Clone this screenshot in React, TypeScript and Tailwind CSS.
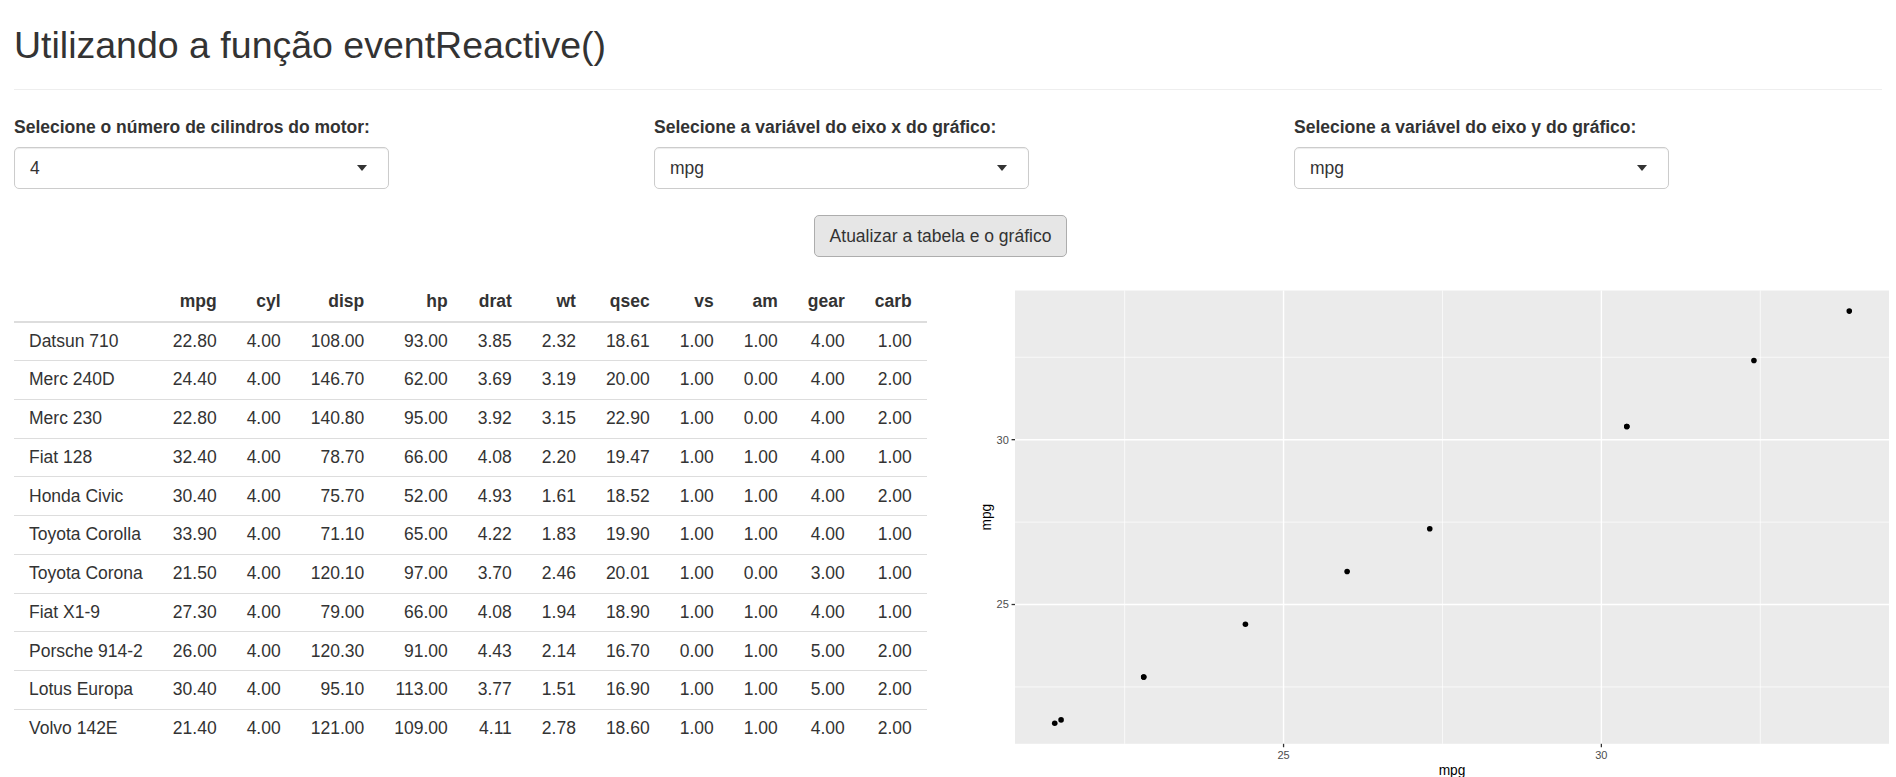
import React from 'react';

const cols = ['mpg', 'cyl', 'disp', 'hp', 'drat', 'wt', 'qsec', 'vs', 'am', 'gear', 'carb'];

const rows: [string, string[]][] = [
  ['Datsun 710', ['22.80', '4.00', '108.00', '93.00', '3.85', '2.32', '18.61', '1.00', '1.00', '4.00', '1.00']],
  ['Merc 240D', ['24.40', '4.00', '146.70', '62.00', '3.69', '3.19', '20.00', '1.00', '0.00', '4.00', '2.00']],
  ['Merc 230', ['22.80', '4.00', '140.80', '95.00', '3.92', '3.15', '22.90', '1.00', '0.00', '4.00', '2.00']],
  ['Fiat 128', ['32.40', '4.00', '78.70', '66.00', '4.08', '2.20', '19.47', '1.00', '1.00', '4.00', '1.00']],
  ['Honda Civic', ['30.40', '4.00', '75.70', '52.00', '4.93', '1.61', '18.52', '1.00', '1.00', '4.00', '2.00']],
  ['Toyota Corolla', ['33.90', '4.00', '71.10', '65.00', '4.22', '1.83', '19.90', '1.00', '1.00', '4.00', '1.00']],
  ['Toyota Corona', ['21.50', '4.00', '120.10', '97.00', '3.70', '2.46', '20.01', '1.00', '0.00', '3.00', '1.00']],
  ['Fiat X1-9', ['27.30', '4.00', '79.00', '66.00', '4.08', '1.94', '18.90', '1.00', '1.00', '4.00', '1.00']],
  ['Porsche 914-2', ['26.00', '4.00', '120.30', '91.00', '4.43', '2.14', '16.70', '0.00', '1.00', '5.00', '2.00']],
  ['Lotus Europa', ['30.40', '4.00', '95.10', '113.00', '3.77', '1.51', '16.90', '1.00', '1.00', '5.00', '2.00']],
  ['Volvo 142E', ['21.40', '4.00', '121.00', '109.00', '4.11', '2.78', '18.60', '1.00', '1.00', '4.00', '2.00']],
];

const SelectBox = ({ label, value }: { label: string; value: string }) => (
  <div>
    <label className="block font-bold leading-[25px]">{label}</label>
    <div className="mt-[7px] w-[375px] h-[42px] border border-[#ccc] rounded-[5px] bg-white px-[15px] flex items-center justify-between shadow-[inset_0_1px_1px_rgba(0,0,0,0.075)]">
      <span className="leading-[25px]">{value}</span>
      <span className="mr-[6px] w-0 h-0 border-x-[5px] border-t-[6px] border-x-transparent border-t-[#333]" />
    </div>
  </div>
);

// escalas do painel do ggplot (coordenadas da página)
const X0 = 1015, X1 = 1889, Y0 = 290, Y1 = 743.3;
const LO = 20.775, HI = 34.525;
const sx = (v: number) => X0 + ((v - LO) * (X1 - X0)) / (HI - LO);
const sy = (v: number) => Y1 - ((v - LO) * (Y1 - Y0)) / (HI - LO);

const Plot = () => {
  const mpg = rows.map((r) => parseFloat(r[1][0]));
  const minor = [22.5, 27.5, 32.5];
  const major = [25, 30];
  return (
    <svg width={922} height={500} viewBox="974 282.5 922 500" className="block shrink-0">
      <rect x={X0} y={Y0} width={X1 - X0} height={Y1 - Y0} fill="#ebebeb" />
      {minor.map((v) => (
        <g key={'m' + v} stroke="#fff" strokeWidth={0.7}>
          <line x1={sx(v)} x2={sx(v)} y1={Y0} y2={Y1} />
          <line x1={X0} x2={X1} y1={sy(v)} y2={sy(v)} />
        </g>
      ))}
      {major.map((v) => (
        <g key={'M' + v} stroke="#fff" strokeWidth={1.4}>
          <line x1={sx(v)} x2={sx(v)} y1={Y0} y2={Y1} />
          <line x1={X0} x2={X1} y1={sy(v)} y2={sy(v)} />
        </g>
      ))}
      {mpg.map((v, i) => (
        <circle key={i} cx={sx(v)} cy={sy(v)} r={2.8} fill="#000" />
      ))}
      <g stroke="#333" strokeWidth={1.3}>
        {major.map((v) => (
          <React.Fragment key={'t' + v}>
            <line x1={X0 - 3.44} x2={X0} y1={sy(v)} y2={sy(v)} />
            <line x1={sx(v)} x2={sx(v)} y1={Y1} y2={Y1 + 3.44} />
          </React.Fragment>
        ))}
      </g>
      <g fill="#4d4d4d" fontSize={11} fontFamily="'Liberation Sans', Arial, sans-serif">
        {major.map((v) => (
          <React.Fragment key={'l' + v}>
            <text x={1008.8} y={sy(v) + 3.9} textAnchor="end">{v}</text>
            <text x={sx(v)} y={758.3} textAnchor="middle">{v}</text>
          </React.Fragment>
        ))}
      </g>
      <g fill="#000" fontSize={13.75} fontFamily="'Liberation Sans', Arial, sans-serif">
        <text x={(X0 + X1) / 2} y={774} textAnchor="middle">mpg</text>
        <text x={991} y={(Y0 + Y1) / 2} textAnchor="middle" transform={`rotate(-90 991 ${(Y0 + Y1) / 2})`}>mpg</text>
      </g>
    </svg>
  );
};

export default function App() {
  return (
    <div className="bg-white min-h-screen overflow-hidden pl-[14px] pr-[14px] pt-[25px] text-[17.5px] text-[#333] font-['Liberation_Sans',Arial,sans-serif]">
      <h2 className="text-[37.5px] leading-[41.25px] font-normal">Utilizando a função eventReactive()</h2>
      <hr className="mt-[22.75px] border-0 border-t border-[#eee]" />

      <div className="mt-[25px] grid grid-cols-[640px_640px_1fr]">
        <SelectBox label="Selecione o número de cilindros do motor:" value="4" />
        <SelectBox label="Selecione a variável do eixo x do gráfico:" value="mpg" />
        <SelectBox label="Selecione a variável do eixo y do gráfico:" value="mpg" />
      </div>

      <div className="mt-[26px] w-[1853px] flex justify-center">
        <button
          type="button"
          className="h-[42px] px-[15px] border border-[#adadad] rounded-[5px] bg-[#e6e6e6] text-[#333] leading-[25px]"
        >
          Atualizar a tabela e o gráfico
        </button>
      </div>

      <div className="mt-[25.5px] flex">
        <div className="w-[960px] shrink-0">
          <table className="border-separate border-spacing-0">
            <thead>
              <tr>
                <th className="px-[15px] pt-[6.25px] pb-[6.75px] leading-[25px] border-b-2 border-[#ddd]" />
                {cols.map((c) => (
                  <th key={c} className="px-[15px] pt-[6.25px] pb-[6.75px] leading-[25px] text-right font-bold border-b-2 border-[#ddd]">
                    {c}
                  </th>
                ))}
              </tr>
            </thead>
            <tbody>
              {rows.map(([name, vals], i) => {
                const cell = i === 0 ? 'py-[6.25px]' : 'py-[6.375px] border-t border-[#ddd]';
                return (
                  <tr key={name}>
                    <td className={`px-[15px] leading-[25px] text-left whitespace-nowrap ${cell}`}>{name}</td>
                    {vals.map((v, j) => (
                      <td key={j} className={`px-[15px] leading-[25px] text-right ${cell}`}>
                        {v}
                      </td>
                    ))}
                  </tr>
                );
              })}
            </tbody>
          </table>
        </div>
        <Plot />
      </div>
    </div>
  );
}
